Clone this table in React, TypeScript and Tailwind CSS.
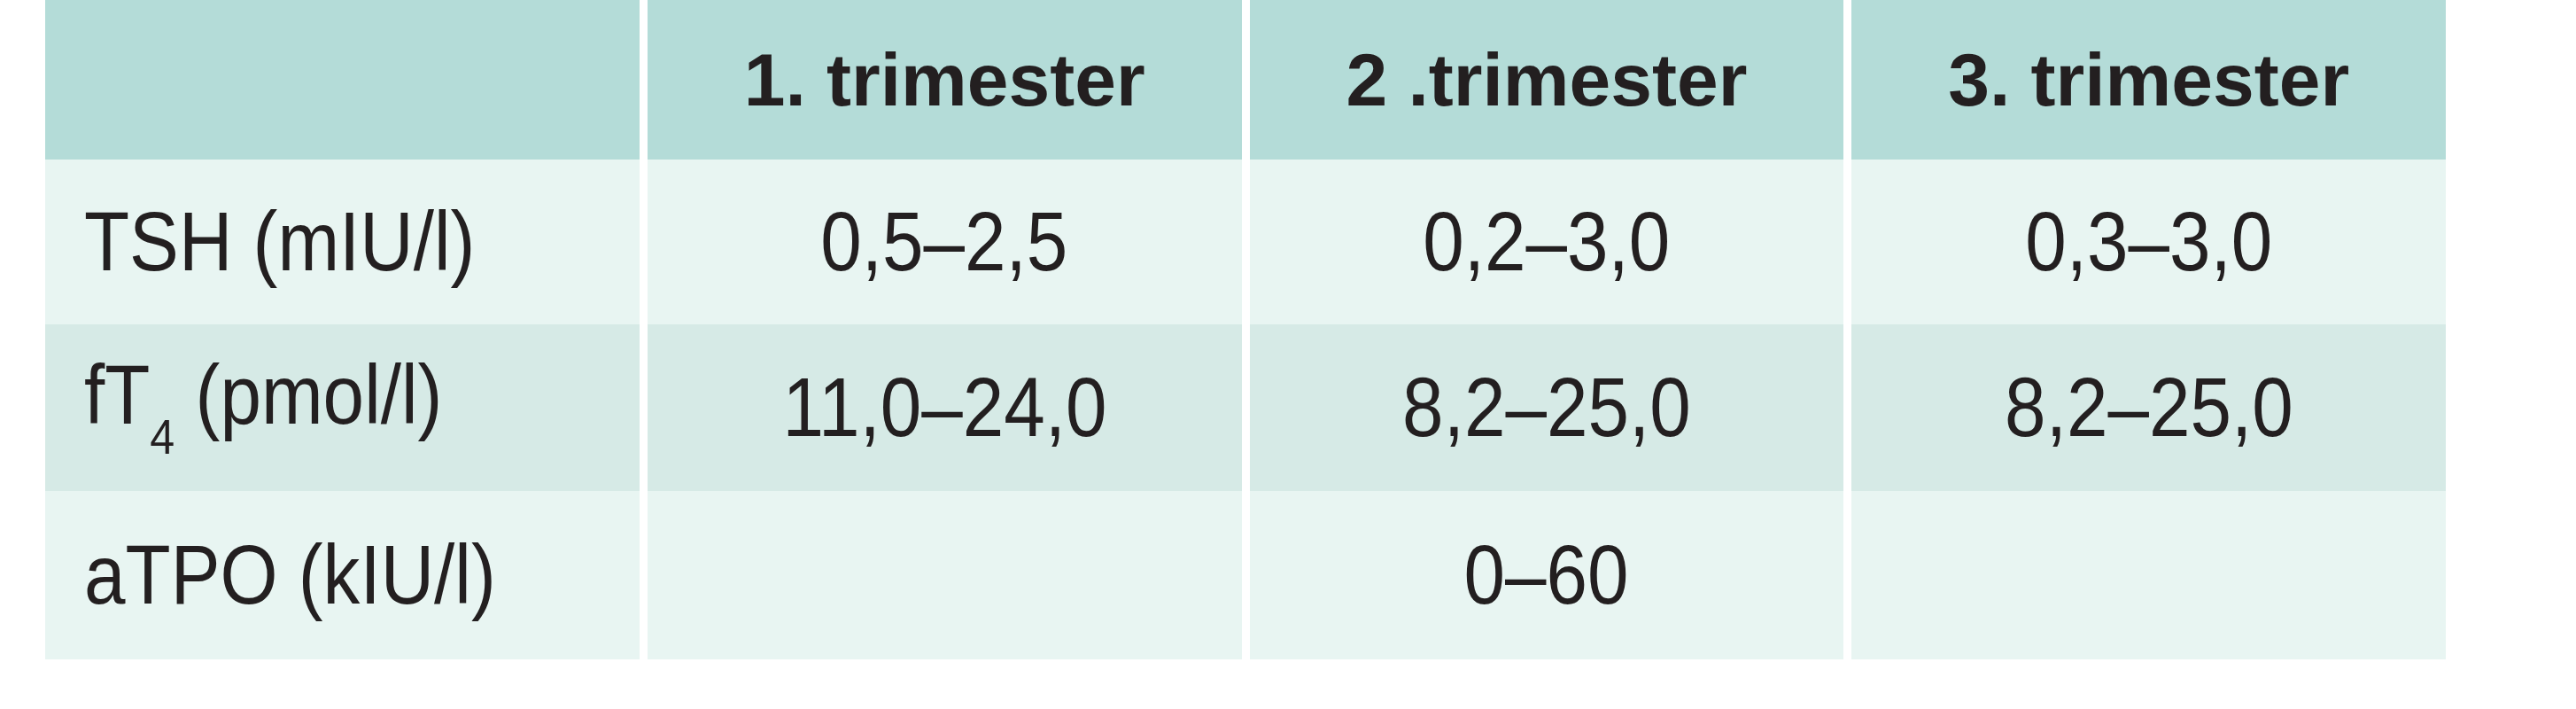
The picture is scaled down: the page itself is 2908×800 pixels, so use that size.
import React from "react";

interface Row {
  label: React.ReactNode;
  values: string[];
  bg: string;
  h: string;
}

const headers = ["", "1. trimester", "2 .trimester", "3. trimester"];

const rows: Row[] = [
  {
    label: <>TSH (mIU/l)</>,
    values: ["0,5–2,5", "0,2–3,0", "0,3–3,0"],
    bg: "bg-[#e8f5f2]",
    h: "h-[186px]",
  },
  {
    label: (
      <>
        fT<span className="align-[-0.6em] text-[0.6em]">4</span> (pmol/l)
      </>
    ),
    values: ["11,0–24,0", "8,2–25,0", "8,2–25,0"],
    bg: "bg-[#d6eae6]",
    h: "h-[188px]",
  },
  {
    label: <>aTPO (kIU/l)</>,
    values: ["", "0–60", ""],
    bg: "bg-[#e8f5f2]",
    h: "h-[190px]",
  },
];

// the source uses a condensed face; squeeze Liberation Sans to match its widths
const body =
  "font-['Liberation_Sans',sans-serif] text-[94px] leading-none text-[#231f20]";

export default function App() {
  return (
    <div className="w-[2908px] h-[800px] bg-white pl-[51px]">
      <div className="grid w-[2710px] grid-cols-4 gap-x-[9px]">
        {/* header */}
        {headers.map((h, i) => (
          <div
            key={i}
            className="flex h-[180px] items-center justify-center bg-[#b4dcd8] font-['Liberation_Sans',sans-serif] text-[84px] font-bold leading-none text-[#231f20]"
          >
            {h}
          </div>
        ))}

        {/* body rows */}
        {rows.map((r, ri) => (
          <React.Fragment key={ri}>
            <div className={`flex items-center pl-[44px] ${r.h} ${r.bg} ${body}`}>
              <span className="inline-block origin-left scale-x-[0.89] whitespace-nowrap">
                {r.label}
              </span>
            </div>
            {r.values.map((v, vi) => (
              <div
                key={vi}
                className={`flex items-center justify-center ${r.h} ${r.bg} ${body}`}
              >
                <span className="inline-block scale-x-[0.89] whitespace-nowrap">{v}</span>
              </div>
            ))}
          </React.Fragment>
        ))}
      </div>
    </div>
  );
}
